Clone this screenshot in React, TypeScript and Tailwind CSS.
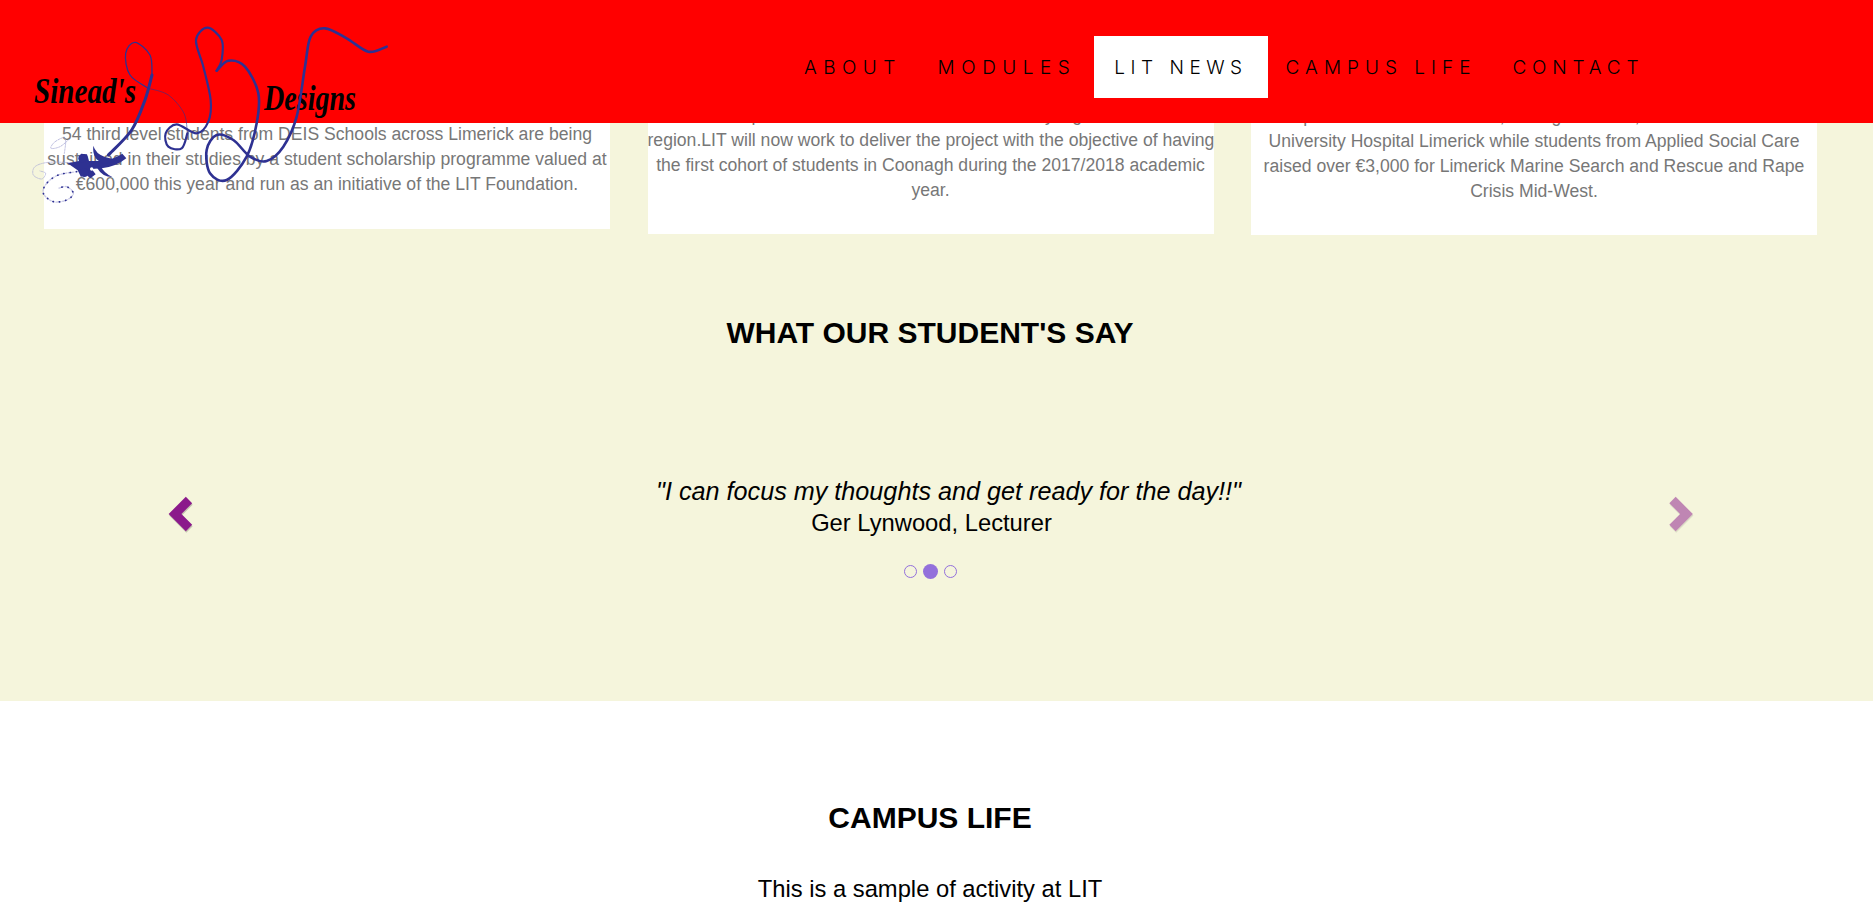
const pts = (p: number[][]) => {
  let d = `M${p[0][0]} ${p[0][1]}`;
  for (let i = 0; i < p.length - 1; i++) {
    const a = p[Math.max(i - 1, 0)], b = p[i], c = p[i + 1], e = p[Math.min(i + 2, p.length - 1)];
    d += ` C${b[0] + (c[0] - a[0]) / 6} ${b[1] + (c[1] - a[1]) / 6} ${c[0] - (e[0] - b[0]) / 6} ${c[1] - (e[1] - b[1]) / 6} ${c[0]} ${c[1]}`;
  }
  return d;
};
const z = (p: number[][]) => p.map(([x, y]) => [x / 3, y / 3]);

function Logo() {
  const spiral = pts([[155, 140], [100, 150], [65, 175], [55, 205], [85, 230], [125, 225], [145, 205], [125, 185], [100, 190]]);
  return (
    <svg className="absolute left-0 top-0 z-30" width="420" height="220" viewBox="0 0 420 220" fill="none" stroke="#2e3192" strokeLinecap="round">
      <text x="34" y="103" stroke="none" fill="#000" fontFamily="'Liberation Serif', serif" fontStyle="italic" fontWeight="700" fontSize="36" textLength="102" lengthAdjust="spacingAndGlyphs">Sinead's</text>
      <text x="264" y="110" stroke="none" fill="#000" fontFamily="'Liberation Serif', serif" fontStyle="italic" fontWeight="700" fontSize="36" textLength="92" lengthAdjust="spacingAndGlyphs">Designs</text>
      <path strokeWidth="3" d={pts(z([[325, 465], [395, 390], [435, 300], [456, 225]]))} />
      <path strokeWidth="1.3" d={pts(z([[456, 225], [450, 165], [405, 127], [377, 160], [390, 225], [445, 265]]))} />
      <path strokeWidth="0.6" d={pts(z([[445, 265], [505, 285], [552, 340], [562, 400]]))} />
      <path strokeWidth="2.2" d={pts(z([[562, 400], [545, 445], [505, 440], [497, 400], [530, 373], [590, 400], [625, 365], [632, 300], [610, 200], [588, 120], [622, 83], [665, 120], [665, 180], [650, 212]]))} />
      <path strokeWidth="2.6" d={pts(z([[650, 212], [685, 182], [735, 200], [775, 280], [770, 370], [740, 470], [680, 540], [630, 520], [620, 450], [650, 405], [700, 420], [750, 470], [800, 483], [850, 440], [890, 350], [915, 200], [932, 110], [975, 85], [1040, 115], [1105, 155], [1160, 140]]))} />
      <g transform="translate(25 125) scale(0.3333)">
        <path strokeWidth="4" stroke="#c9c9e6" strokeDasharray="5 5" d={spiral} />
        <path strokeWidth="5" strokeDasharray="1 18" d={spiral} />
        <path strokeWidth="2" stroke="#a9abd6" strokeDasharray="5 3" d={pts([[140, 113], [70, 112], [30, 125], [25, 150], [50, 162], [62, 145], [45, 138]])} />
        <path strokeWidth="2.4" stroke="#a9abd6" strokeDasharray="5 4" d={pts([[118, 85], [122, 50], [115, 38], [88, 52], [78, 70], [105, 65], [130, 45]])} />
        <g fill="#2e3192" stroke="none">
          <path d="M128 115 L162 108 L168 86 L186 88 L192 108 L228 108 Q265 104 292 86 L304 100 Q272 126 230 130 L200 132 L212 148 L196 160 L180 146 L168 156 L158 136 Z" />
          <path d="M205 62 Q212 86 240 96 L278 106 L240 116 Q200 106 205 62 Z" />
          <path d="M226 120 Q234 142 262 156 Q232 156 216 128 Z" />
          <circle cx="172" cy="100" r="12" />
          <circle cx="178" cy="143" r="13" />
        </g>
        <circle cx="200" cy="132" r="5" fill="#fff" stroke="none" />
      </g>
    </svg>
  );
}

const Chevron = ({ right }: { right?: boolean }) => {
  const d = right ? "M3.5 5 L17.5 19 L3.5 33" : "M21 5 L7 19 L21 33";
  return (
    <svg width="28" height="38" viewBox="0 0 28 38" className={`mt-[20px] ${right ? "opacity-50" : ""}`}>
      <path d={d} fill="none" stroke="#000" strokeOpacity="0.2" strokeWidth="9" transform="translate(0.5 1.5)" />
      <path d={d} fill="none" stroke="#8b1a8b" strokeWidth="9" />
    </svg>
  );
};

const nav = [
  { t: "ABOUT", c: "px-[18px] tracking-[6.4px]" },
  { t: "MODULES", c: "px-[18px] tracking-[6.5px]" },
  { t: "LIT NEWS", c: "bg-white px-[20px] tracking-[5.5px]" },
  { t: "CAMPUS LIFE", c: "px-[18px] tracking-[6px]" },
  { t: "CONTACT", c: "px-[18px] tracking-[5.8px]" },
];

const cards = [
  ["54 third level students from DEIS Schools across Limerick are being", "sustained in their studies by a student scholarship programme valued at", "€600,000 this year and run as an initiative of the LIT Foundation."],
  ["Limerick campus will be a hub for the arts and many high-end facilities in", "region.LIT will now work to deliver the project with the objective of having", "the first cohort of students in Coonagh during the 2017/2018 academic", "year."],
  ["Spirit of the Students Fund, raising over €10,000 for the unit at", "University Hospital Limerick while students from Applied Social Care", "raised over €3,000 for Limerick Marine Search and Rescue and Rape", "Crisis Mid-West."],
];

export default function App() {
  return (
    <div className="relative h-[910px] overflow-hidden bg-white font-['Liberation_Sans',sans-serif] text-black">
      <header className="absolute inset-x-0 top-0 z-20 flex h-[123px] items-start bg-[#ff0000] pl-[786px] pt-[36px]">
        {nav.map((n) => (
          <a key={n.t} className={`flex h-[62px] items-center font-['Inter',sans-serif] text-[19px] font-[350] leading-none ${n.c}`}>
            {n.t}
          </a>
        ))}
      </header>
      <Logo />
      <main className="bg-[#f5f5dc]">
        <section className="flex h-[235px] items-start gap-[37.5px] px-[44px]">
          {cards.map((lines, i) => (
            <div key={i} className={`w-[566px] bg-white text-center text-[17.6px] leading-[25px] text-[#777777] ${["h-[229px] pt-[122px]", "h-[234px] pt-[103px]", "h-[235px] pt-[104px]"][i]}`}>
              {lines.map((l) => <p key={l} className="whitespace-nowrap">{l}</p>)}
            </div>
          ))}
        </section>
        <section className="h-[466px] pr-[13px] pt-[82px] text-center">
          <h2 className="text-[30px] font-bold leading-[32px]">WHAT OUR STUDENT'S SAY</h2>
          <div className="flex items-start justify-between pl-[168px] pr-[163px] pt-[126px]">
            <Chevron />
            <div className="text-[24px] leading-[32px]">
              <p className="pl-[32px] text-[25.2px] italic">"I can focus my thoughts and get ready for the day!!"</p>
              <p className="pr-[2px] text-[23.75px]">Ger Lynwood, Lecturer</p>
            </div>
            <Chevron right />
          </div>
          <div className="mt-[25px] flex items-center justify-center gap-[6px]">
            <span className="size-[13px] rounded-full border-[1.5px] border-[#9370db]" />
            <span className="size-[15px] rounded-full bg-[#9370db]" />
            <span className="size-[13px] rounded-full border-[1.5px] border-[#9370db]" />
          </div>
        </section>
      </main>
      <section className="pr-[13px] pt-[101px] text-center">
        <h2 className="text-[30px] font-bold leading-[32px]">CAMPUS LIFE</h2>
        <p className="mt-[39px] text-[23.75px] leading-[32px]">This is a sample of activity at LIT</p>
      </section>
    </div>
  );
}
